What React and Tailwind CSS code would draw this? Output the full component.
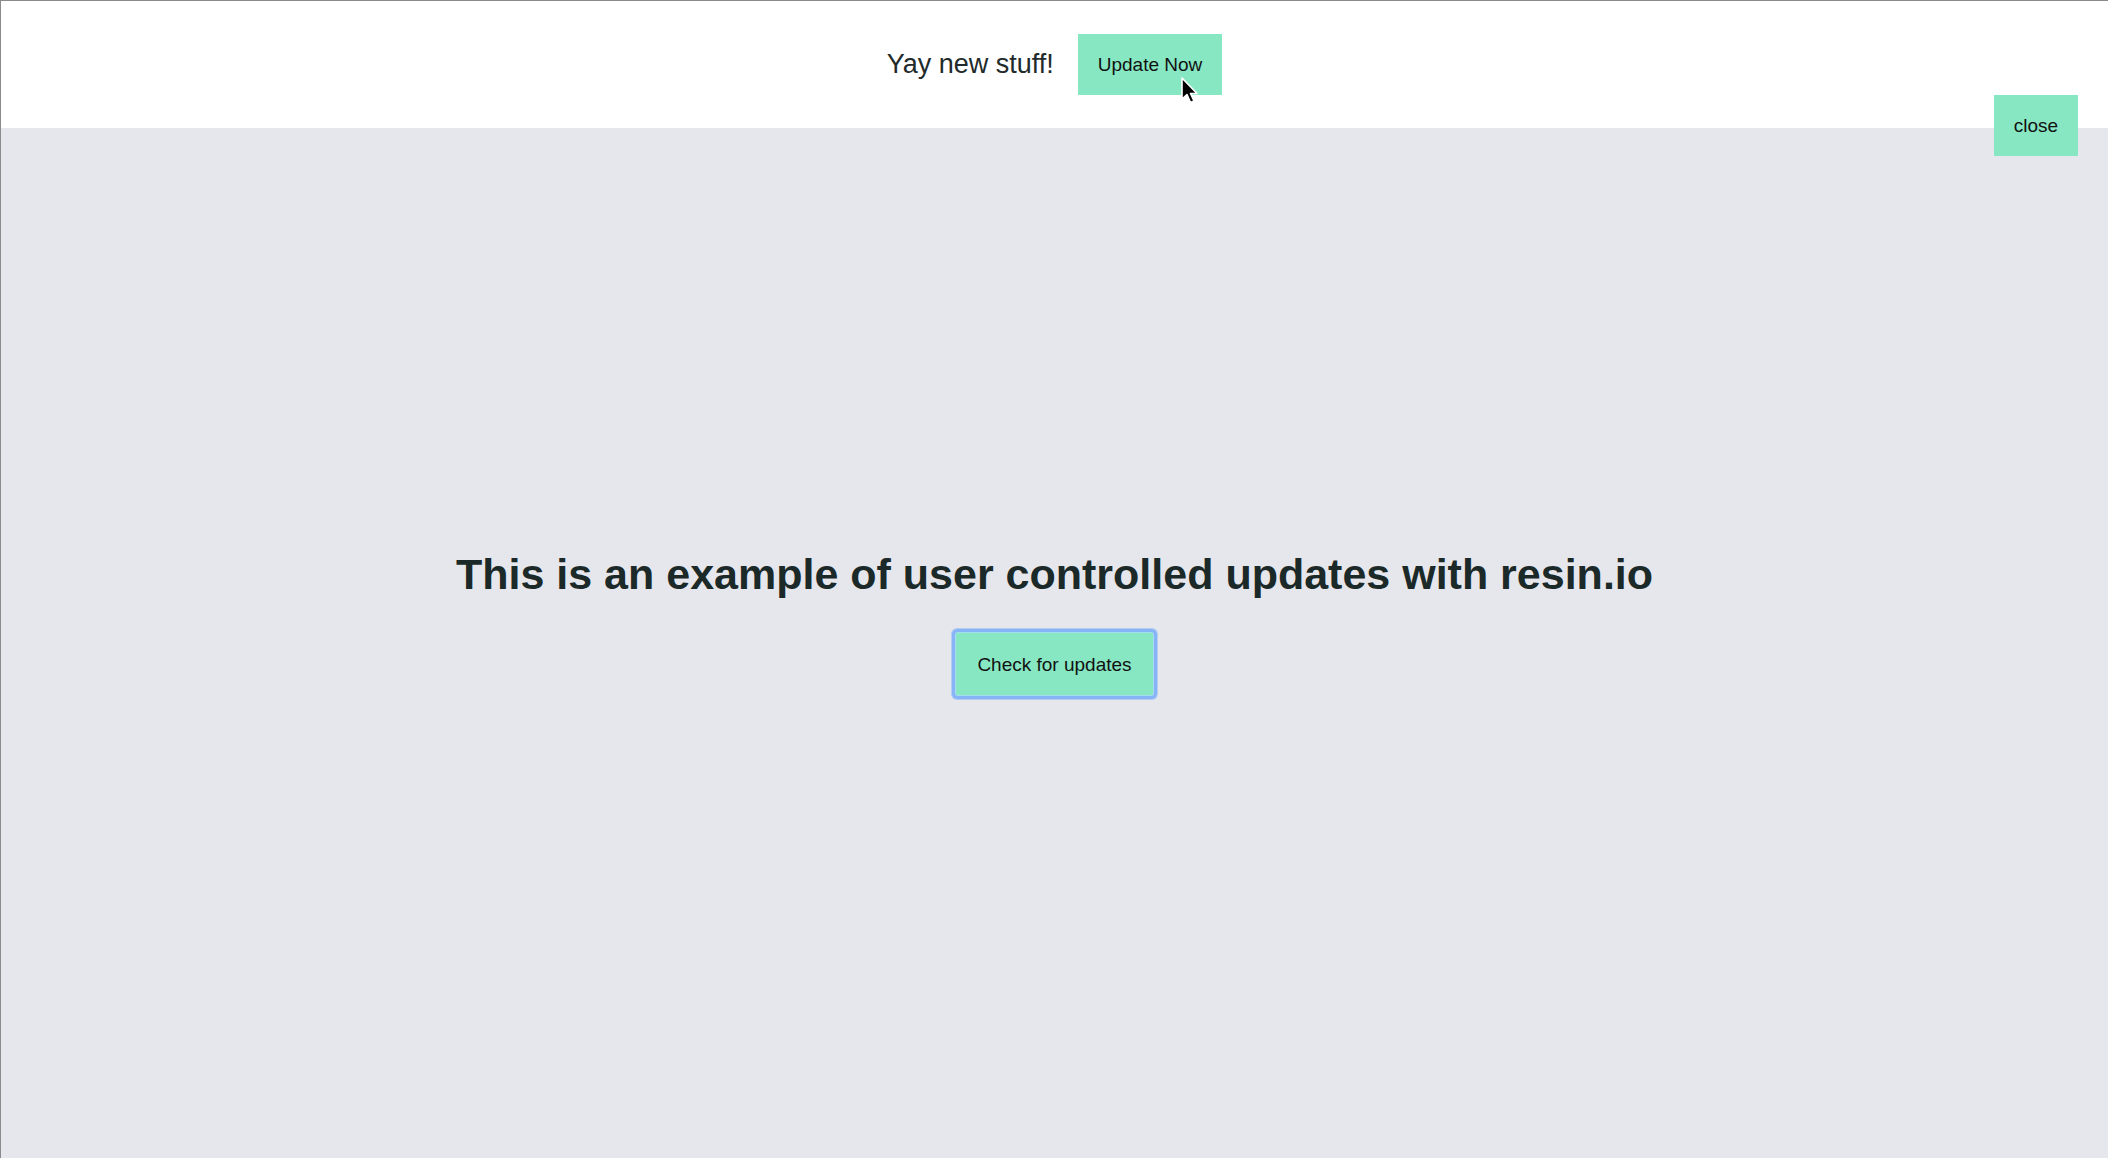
import React from "react";

export default function App() {
  return (
    <div
      className="relative w-[2108px] h-[1158px] flex flex-col border-t border-l border-[#8a8a8a] overflow-hidden"
      style={{ fontFamily: '"Liberation Sans", Arial, sans-serif' }}
    >
      <header className="h-[127px] bg-white flex items-center justify-center gap-[24px] shrink-0">
        <span className="text-[27px] text-[#222b2b] leading-none">Yay new stuff!</span>
        <button className="h-[61px] px-[20px] bg-[#87e7c3] text-[19px] text-[#111] leading-none">
          Update Now
        </button>
      </header>
      <main className="flex-1 bg-[#e6e7ec] flex flex-col items-center pt-[425px]">
        <h1 className="text-[43px] font-bold text-[#1b2929] leading-none">
          This is an example of user controlled updates with resin.io
        </h1>
        <button className="mt-[37px] h-[62px] px-[21px] bg-[#87e7c3] text-[19px] text-[#111] leading-none rounded-[2px] shadow-[0_0_0_1px_#a6dcef,0_0_0_4px_#86b4f7,0_0_0_5px_#b3cdf3]">
          Check for updates
        </button>
      </main>
      <button className="absolute top-[94px] right-[30px] w-[84px] h-[61px] bg-[#87e7c3] text-[19px] text-[#111] leading-none">
        close
      </button>
      <svg
        className="absolute left-[1179px] top-[76px]"
        width="20"
        height="30"
        viewBox="0 0 20 30"
      >
        <path
          d="M2 1 L2 22 L7 17.5 L10.5 25.5 L14 24 L10.5 16.5 L17 16.5 Z"
          fill="#000"
          stroke="#fff"
          strokeWidth="1.6"
          strokeLinejoin="round"
        />
      </svg>
    </div>
  );
}
